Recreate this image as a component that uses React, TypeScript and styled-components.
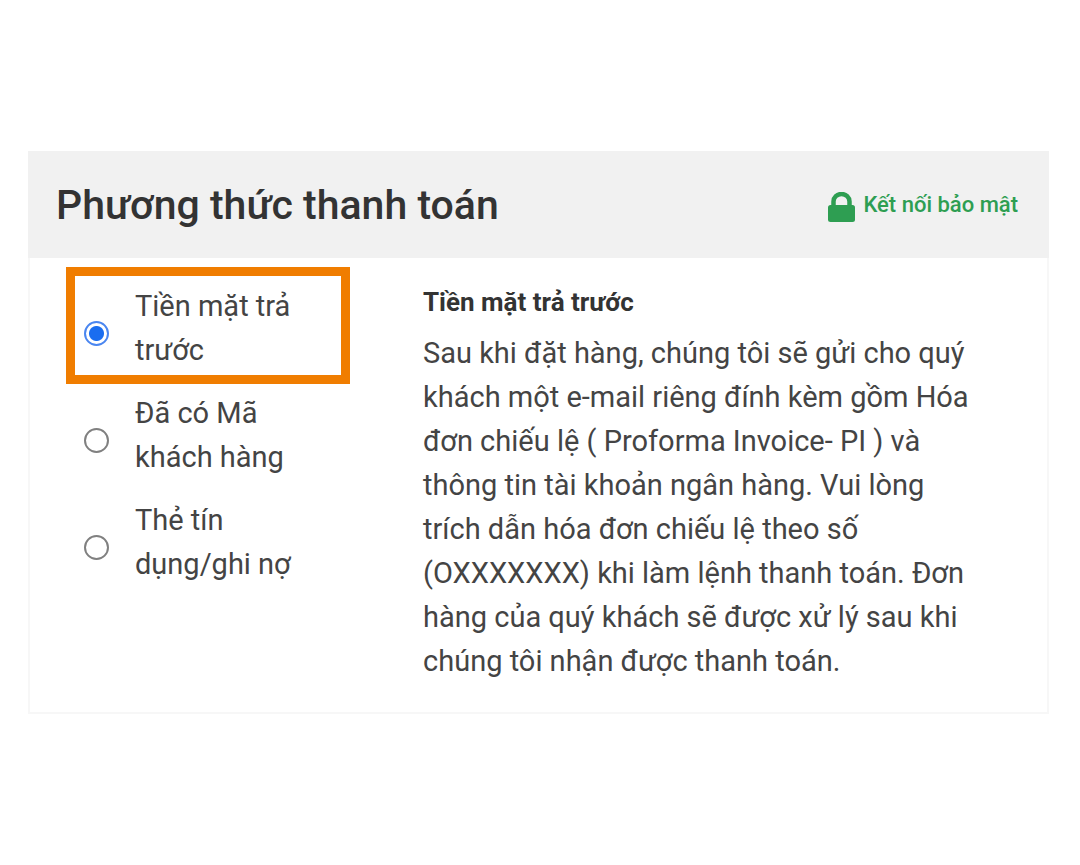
import React, { useState } from "react";
import styled, { createGlobalStyle } from "styled-components";

const GlobalStyle = createGlobalStyle`
  * { box-sizing: border-box; }
  body {
    margin: 0;
    background: #fff;
    color: #444;
    font-family: Roboto, "Liberation Sans", sans-serif;
    font-size: 29px;
    line-height: 44px;
  }
`;

const Page = styled.main`
  padding: 151px 31px 151px 28px;
`;

const Header = styled.header`
  display: flex;
  align-items: center;
  justify-content: space-between;
  min-height: 107px;
  padding: 0 31px 0 28px;
  background: #f1f1f1;
`;

const Title = styled.h1`
  margin: 0;
  color: #333;
  font-size: 41px;
  font-weight: 500;
`;

const Secure = styled.div`
  display: flex;
  align-items: center;
  gap: 8px;
  color: #2e9e52;
  font-size: 22px;
  font-weight: 500;
`;

const LockIcon = styled.svg`
  display: block;
  width: 27px;
  height: 30px;
  margin-top: 4px;
`;

const Body = styled.div`
  display: grid;
  grid-template-columns: 266px 1fr;
  column-gap: 82px;
  padding: 18px 60px 29px 45px;
  border: 2px solid #f7f7f7;
  border-top: 0;
`;

const Options = styled.fieldset`
  display: flex;
  flex-direction: column;
  gap: 8px;
  min-width: 0;
  margin: 0;
  padding: 0;
  border: 0;
`;

const Option = styled.label<{ $highlighted: boolean }>`
  display: flex;
  align-items: center;
  gap: 26px;
  padding: 0 40px 0 9px;
  outline: ${(p) => (p.$highlighted ? "9px solid #f07d00" : "none")};
`;

const OptionName = styled.span`
  padding: 8px 0 3px;
`;

const Radio = styled.input`
  flex: none;
  width: 25px;
  height: 25px;
  margin: 16px 0 0;
  appearance: none;
  border: 2px solid #808080;
  border-radius: 50%;
  background: #fff;

  &:checked {
    border-color: #4a86f0;
    background: radial-gradient(circle, #1a6df0 7px, #fff 8px);
  }
`;

const Details = styled.div`
  padding-top: 4px;
`;

const DetailsTitle = styled.h2`
  margin: 0 0 7px;
  color: #333;
  font-size: 26px;
  font-weight: 700;
`;

const Text = styled.p`
  margin: 0;
`;

const methods = ["Tiền mặt trả trước", "Đã có Mã khách hàng", "Thẻ tín dụng/ghi nợ"];

export default function App() {
  const [selected, setSelected] = useState(0);
  return (
    <Page>
      <GlobalStyle />
      <section>
        <Header>
          <Title>Phương thức thanh toán</Title>
          <Secure>
            <LockIcon viewBox="0 0 27 30" aria-hidden="true">
              <path d="M5.5 14V9.5a8 7.5 0 0 1 16 0V14" fill="none" stroke="currentColor" strokeWidth="4.5" />
              <rect y="13" width="27" height="17" rx="2.5" fill="currentColor" />
            </LockIcon>
            Kết nối bảo mật
          </Secure>
        </Header>
        <Body>
          <Options aria-label="Phương thức thanh toán">
            {methods.map((m, i) => (
              <Option key={m} $highlighted={selected === i}>
                <Radio type="radio" name="method" checked={selected === i} onChange={() => setSelected(i)} />
                <OptionName>{m}</OptionName>
              </Option>
            ))}
          </Options>
          <Details>
            <DetailsTitle>Tiền mặt trả trước</DetailsTitle>
            <Text>
              Sau khi đặt hàng, chúng tôi sẽ gửi cho quý khách một e-mail riêng đính kèm gồm Hóa đơn chiếu lệ ( Proforma
              Invoice- PI ) và thông tin tài khoản ngân hàng. Vui lòng trích dẫn hóa đơn chiếu lệ theo số (OXXXXXXX) khi
              làm lệnh thanh toán. Đơn hàng của quý khách sẽ được xử lý sau khi chúng tôi nhận được thanh toán.
            </Text>
          </Details>
        </Body>
      </section>
    </Page>
  );
}
